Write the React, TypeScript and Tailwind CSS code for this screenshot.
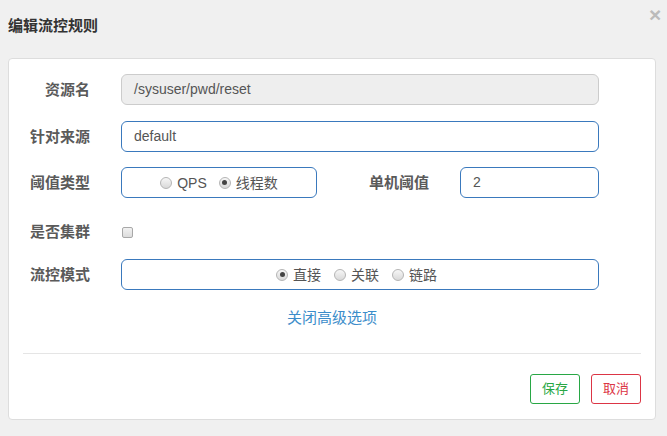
import React from 'react';

const font = { fontFamily: '"Liberation Sans", "Noto Sans CJK SC", sans-serif' };

const Radio: React.FC<{ checked?: boolean; label: string }> = ({ checked, label }) => (
  <span className="flex items-center gap-[5px]">
    <span className="w-[12px] h-[12px] rounded-full border border-[#b5b5b5] bg-gradient-to-b from-[#f7f7f7] to-[#d9d9d9] flex items-center justify-center">
      {checked && <span className="w-[5px] h-[5px] rounded-full bg-[#444]" />}
    </span>
    <span className="text-[14px] text-[#555] leading-[16px]">{label}</span>
  </span>
);

const Label: React.FC<{ children: React.ReactNode; className?: string }> = ({ children, className = '' }) => (
  <div className={`w-[81px] text-right text-[15px] font-bold text-[#5a5a5a] leading-[18px] ${className}`}>{children}</div>
);

export default function App() {
  return (
    <div className="w-[667px] h-[436px] bg-[#f0f0f0] relative overflow-hidden" style={font}>
      <div className="pt-[17px] pl-[8px] text-[15px] font-bold text-[#333] leading-[18px]">编辑流控规则</div>
      <button className="absolute left-[649px] top-[9px] text-[#bbb] text-[21px] leading-[12px] font-bold">×</button>

      <div className="mt-[23px] ml-[8px] w-[648px] h-[362px] bg-white border border-[#ddd] rounded-[4px] pt-[15px]">
        {/* 资源名 */}
        <div className="flex items-center">
          <Label>资源名</Label>
          <div className="ml-[31px] w-[478px] h-[31px] rounded-[6px] border border-[#ccc] bg-[#eee] flex items-center pl-[12px] text-[14px] text-[#555]">
            /sysuser/pwd/reset
          </div>
        </div>

        {/* 针对来源 */}
        <div className="flex items-center mt-[16px]">
          <Label>针对来源</Label>
          <div className="ml-[31px] w-[478px] h-[31px] rounded-[6px] border border-[#3a79bd] bg-white flex items-center pl-[12px] text-[14px] text-[#555]">
            default
          </div>
        </div>

        {/* 阈值类型 / 单机阈值 */}
        <div className="flex items-center mt-[15px]">
          <Label>阈值类型</Label>
          <div className="ml-[31px] w-[196px] h-[31px] rounded-[6px] border border-[#3a79bd] flex items-center justify-center gap-[12px]">
            <Radio label="QPS" />
            <Radio checked label="线程数" />
          </div>
          <Label className="ml-[31px]">单机阈值</Label>
          <div className="ml-[31px] w-[139px] h-[31px] rounded-[6px] border border-[#3a79bd] flex items-center pl-[12px] text-[14px] text-[#555]">
            2
          </div>
        </div>

        {/* 是否集群 */}
        <div className="flex items-center mt-[24px] h-[20px]">
          <Label>是否集群</Label>
          <span className="ml-[32px] w-[11px] h-[11px] rounded-[2px] border border-[#a8a8a8] bg-gradient-to-b from-[#f2f2f2] to-[#dcdcdc]" />
        </div>

        {/* 流控模式 */}
        <div className="flex items-center mt-[17px]">
          <Label>流控模式</Label>
          <div className="ml-[31px] w-[478px] h-[31px] rounded-[6px] border border-[#3a79bd] flex items-center justify-center gap-[13px] pr-[7px]">
            <Radio checked label="直接" />
            <Radio label="关联" />
            <Radio label="链路" />
          </div>
        </div>

        <div className="mt-[18px] h-[20px] flex items-center justify-center">
          <a className="text-[15px] text-[#3c8dca] cursor-pointer">关闭高级选项</a>
        </div>

        <div className="mx-[14px] mt-[25px] border-t border-[#e5e5e5]" />

        <div className="flex justify-end gap-[11px] pr-[14px] mt-[20px]">
          <button className="w-[50px] h-[30px] rounded-[3px] border border-[#28a745] text-[#28a745] text-[13px] bg-white">保存</button>
          <button className="w-[50px] h-[30px] rounded-[3px] border border-[#dc3545] text-[#dc3545] text-[13px] bg-white">取消</button>
        </div>
      </div>
    </div>
  );
}
